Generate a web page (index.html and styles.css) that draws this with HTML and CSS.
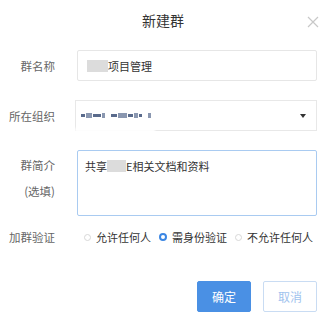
FILE: index.html
```html
<!DOCTYPE html>
<html lang="zh-CN">
  <head>
    <meta charset="UTF-8" />
    <meta name="viewport" content="width=device-width, initial-scale=1.0" />
    <title>新建群</title>
    <link rel="stylesheet" href="styles.css">
  </head>

  <body>
    <div class="dialog">
      <div class="dialog-header">
        <h3>新建群</h3>
        <button class="close-btn" type="button">
          <svg width="12" height="12" viewBox="0 0 12 12">
            <path d="M1 1 L11 11 M11 1 L1 11" stroke="#c8c8c8" stroke-width="1.2" fill="none" />
          </svg>
        </button>
      </div>

      <form class="group-form">
        <div class="form-row">
          <label class="form-label">群名称</label>
          <div class="text-input"><span class="blur-mark name-mark"></span>项目管理</div>
        </div>

        <div class="form-row">
          <label class="form-label">所在组织</label>
          <div class="select-input">
            <span class="org-name">
              <i class="px" style="width:4px"></i><i class="px px-tall" style="width:6px"></i><i class="px" style="width:8px"></i><i class="px px-tall" style="width:3px"></i>
              <i class="gap"></i>
              <i class="px" style="width:6px"></i><i class="px px-tall" style="width:9px"></i><i class="px" style="width:5px"></i><i class="px px-tall" style="width:4px"></i><i class="px" style="width:3px"></i>
              <i class="gap"></i>
              <i class="px px-tall" style="width:3px"></i>
            </span>
            <span class="select-arrow"></span>
            <span class="smudge"></span>
          </div>
        </div>

        <div class="form-row">
          <div class="form-label form-label-multi">
            <span>群简介</span>
            <span>(选填)</span>
          </div>
          <div class="textarea-input">共享<span class="blur-mark desc-mark"></span>E相关文档和资料</div>
        </div>

        <div class="form-row radio-row">
          <label class="form-label">加群验证</label>
          <div class="radio-group">
            <label class="radio"><span class="radio-dot"></span>允许任何人</label>
            <label class="radio"><span class="radio-dot checked"></span>需身份验证</label>
            <label class="radio"><span class="radio-dot"></span>不允许任何人</label>
          </div>
        </div>
      </form>

      <div class="dialog-footer">
        <button type="button" class="btn btn-primary">确定</button>
        <button type="button" class="btn btn-cancel">取消</button>
      </div>
    </div>
  </body>
</html>
```

FILE: styles.css
```css
body {
  margin: 0;
  font-family: "Noto Sans CJK SC", "Noto Sans", sans-serif;
  background: #fff;
  color: #333;
}

.dialog {
  width: 333px;
  height: 327px;
  background: #fff;
}

.dialog-header {
  position: relative;
  height: 40px;
  display: flex;
  align-items: center;
  justify-content: center;
  padding-right: 7px;
}

.dialog-header h3 {
  margin: 0;
  font-size: 14px;
  font-weight: normal;
  color: #333;
}

.close-btn {
  position: absolute;
  right: 14px;
  top: 16px;
  padding: 0;
  border: none;
  background: none;
  display: flex;
}

.group-form {
  padding: 10px 16px 0 0;
  display: flex;
  flex-direction: column;
  gap: 19px;
}

.form-row {
  display: flex;
  align-items: center;
  gap: 22px;
}

.form-label {
  width: 55px;
  flex-shrink: 0;
  text-align: right;
  font-size: 11.5px;
  color: #666;
}

.form-label-multi {
  align-self: flex-start;
  display: flex;
  flex-direction: column;
  line-height: 26px;
  padding-top: 2px;
}

.text-input,
.textarea-input {
  flex: 1;
  box-sizing: border-box;
  border: 1px solid #e6e6e6;
  border-radius: 2px;
  font-size: 11px;
  color: #333;
  display: flex;
  align-items: center;
}

.text-input {
  height: 31px;
  padding-left: 9px;
}

.blur-mark {
  display: inline-block;
  height: 12px;
  background: #dcdcdc;
  filter: blur(0.6px);
}

.name-mark {
  width: 21px;
}

.desc-mark {
  width: 19px;
  margin-top: 3px;
}

.select-input {
  position: relative;
  flex: 1;
  margin-left: -2px;
  height: 31px;
  box-sizing: border-box;
  border: 1px solid #e8e8e8;
  display: flex;
  align-items: center;
  padding: 0 10px 0 5px;
}

.org-name {
  display: flex;
  align-items: center;
  gap: 1px;
  filter: blur(0.5px);
}

.px {
  display: block;
  height: 3px;
  background: #5a6b8c;
}

.px-tall {
  height: 5px;
  background: #8a97b0;
}

.gap {
  display: block;
  width: 4px;
}

.select-arrow {
  margin-left: auto;
  width: 0;
  height: 0;
  border-left: 3px solid transparent;
  border-right: 3px solid transparent;
  border-top: 4px solid #333;
}

.smudge {
  position: absolute;
  left: -1px;
  bottom: -2px;
  width: 80px;
  height: 4px;
  background: #fff;
  filter: blur(1px);
}

.textarea-input {
  height: 66px;
  align-items: flex-start;
  padding: 6px 7px;
  line-height: 18px;
  border-color: #a9cbf1;
}

.radio-row {
  height: 20px;
  margin-top: -8px;
}

.radio-group {
  display: flex;
  align-items: center;
  margin-left: 7px;
  font-size: 11px;
  color: #333;
  white-space: nowrap;
}

.radio {
  display: flex;
  align-items: center;
  flex-shrink: 0;
  gap: 5px;
  margin-right: 8px;
}

.radio:last-child {
  margin-right: 0;
}

.radio-dot {
  width: 7px;
  height: 7px;
  flex-shrink: 0;
  box-sizing: border-box;
  border: 1px solid #d8d8d8;
  border-radius: 50%;
}

.radio-dot.checked {
  width: 8px;
  height: 8px;
  border: 2.5px solid #3b86e3;
}

.dialog-footer {
  display: flex;
  justify-content: flex-end;
  gap: 12px;
  padding: 34px 16px 0 0;
}

.btn {
  width: 54px;
  height: 31px;
  border-radius: 2px;
  font-family: inherit;
  font-size: 12px;
  cursor: pointer;
}

.btn-primary {
  background: #4a90e4;
  border: 1px solid #4a90e4;
  color: #fff;
}

.btn-cancel {
  background: #fff;
  border: 1px solid #c9dcf3;
  color: #9fc3ee;
}
```
